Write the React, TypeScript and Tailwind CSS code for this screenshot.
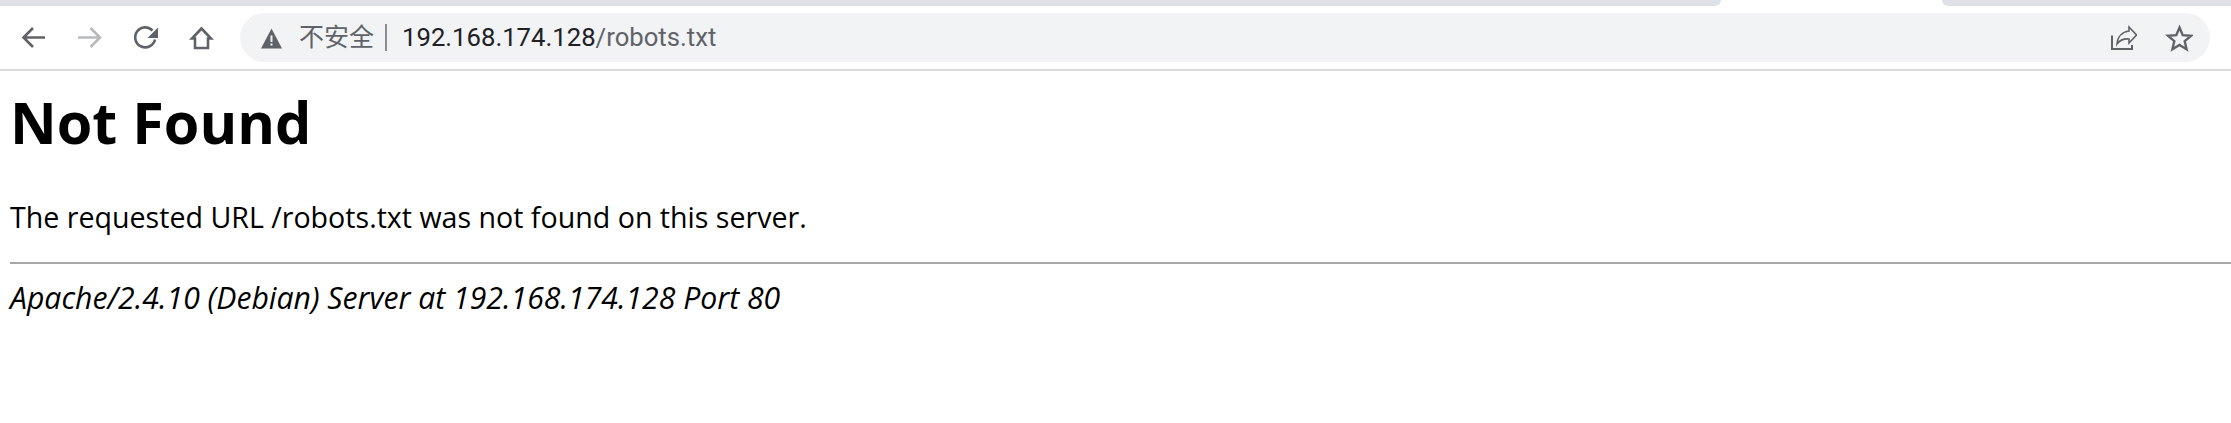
const ui = "font-['Roboto','Noto_Sans_CJK_SC',sans-serif]";

function TabStrip() {
  return (
    <div className="flex h-[6px] bg-white">
      <div className="h-full w-[1721px] rounded-br-[10px] bg-[#dee1e6]" />
      <div className="h-full w-[221px]" />
      <div className="h-full flex-1 rounded-bl-[10px] bg-[#dee1e6]" />
    </div>
  );
}

function NavIcons() {
  return (
    <div className="flex h-[49px] w-[240px] items-center gap-[26px] pl-[18px]">
      <svg width="30" height="30" viewBox="0 0 30 30" fill="none" stroke="#5f6368" strokeWidth="2.6">
        <path d="M27 14.500H6M15 5 5.500 14.500l9.500 9.500" />
      </svg>
      <svg width="30" height="30" viewBox="0 0 30 30" fill="none" stroke="#b8babd" strokeWidth="2.6">
        <path d="M4 14.500h21M16.500 5l9.500 9.500-9.500 9.500" />
      </svg>
      <svg width="30" height="30" viewBox="0 0 30 30" fill="none" stroke="#5f6368" strokeWidth="2.6">
        <path d="M22.500 7.500A10 10 0 1 0 25 16.500" />
        <path d="M28 4.500V15H17.500z" fill="#5f6368" stroke="none" />
      </svg>
      <svg width="30" height="30" viewBox="0 0 30 30" fill="none" stroke="#5f6368" strokeWidth="2.6">
        <path d="M15.500 5.500 6 15.500h3V25h13V15.500h3z" strokeLinejoin="miter" />
      </svg>
    </div>
  );
}

function Omnibox() {
  return (
    <div className={`${ui} flex h-[49px] w-[1970px] items-center rounded-full bg-[#f1f3f4] pl-[20px] pr-[17px]`}>
      <svg width="26" height="26" viewBox="0 0 26 26" fill="#5f6368">
        <path d="M11.500 3.500 22 23.500H1z" />
        <path d="M10.500 10.500h2v6.500h-2zM10.500 18.500h2v2h-2z" fill="#f1f3f4" />
      </svg>
      <span className="ml-[13px] text-[25px] text-[#5f6368]">不安全</span>
      <span className="ml-[11px] h-[27px] w-[2px] bg-[#8a8d91]" />
      <span className="ml-[15px] text-[25.700px] text-[#202124]">
        192.168.174.128<span className="text-[#5f6368]">/robots.txt</span>
      </span>
      <div className="ml-auto flex items-center gap-[28px]">
        <svg width="28" height="28" viewBox="0 0 28 28" fill="none" stroke="#5f6368" strokeWidth="2">
          <path d="M3 11.500V25H23v-4" />
          <path d="M20 3l7.500 8-7.500 8v-4c-5-.5-9 1-12 5 .5-7 5-12 12-13z" strokeWidth="1.600" />
        </svg>
        <svg width="28" height="28" viewBox="0 0 28 28" fill="none" stroke="#5f6368" strokeWidth="2.400">
          <path d="M14.500 3.500l3.200 7.600 8.300.7-6.300 5.400 1.900 8.100-7.100-4.300-7.100 4.300 1.900-8.100-6.300-5.400 8.300-.7z" />
        </svg>
      </div>
    </div>
  );
}

export default function App() {
  return (
    <div className="h-[423px] overflow-hidden bg-white">
      <TabStrip />
      <div className="flex h-[63px] items-start pt-[7px]">
        <NavIcons />
        <Omnibox />
      </div>
      <div className="h-[2px] bg-[#d9dadc]" />
      <div className="pl-[10px] font-['Open_Sans',sans-serif] text-black">
        <h1 className="mt-[15px] text-[57.500px] leading-[72px] font-bold">Not Found</h1>
        <p className="mt-[39px] text-[28.600px] leading-[40px]">The requested URL /robots.txt was not found on this server.</p>
        <hr className="mt-[25px] border-t-2 border-[#a8a8a8]" />
        <address className="mt-[14px] text-[30.200px] leading-[40px] italic">Apache/2.4.10 (Debian) Server at 192.168.174.128 Port 80</address>
      </div>
    </div>
  );
}
